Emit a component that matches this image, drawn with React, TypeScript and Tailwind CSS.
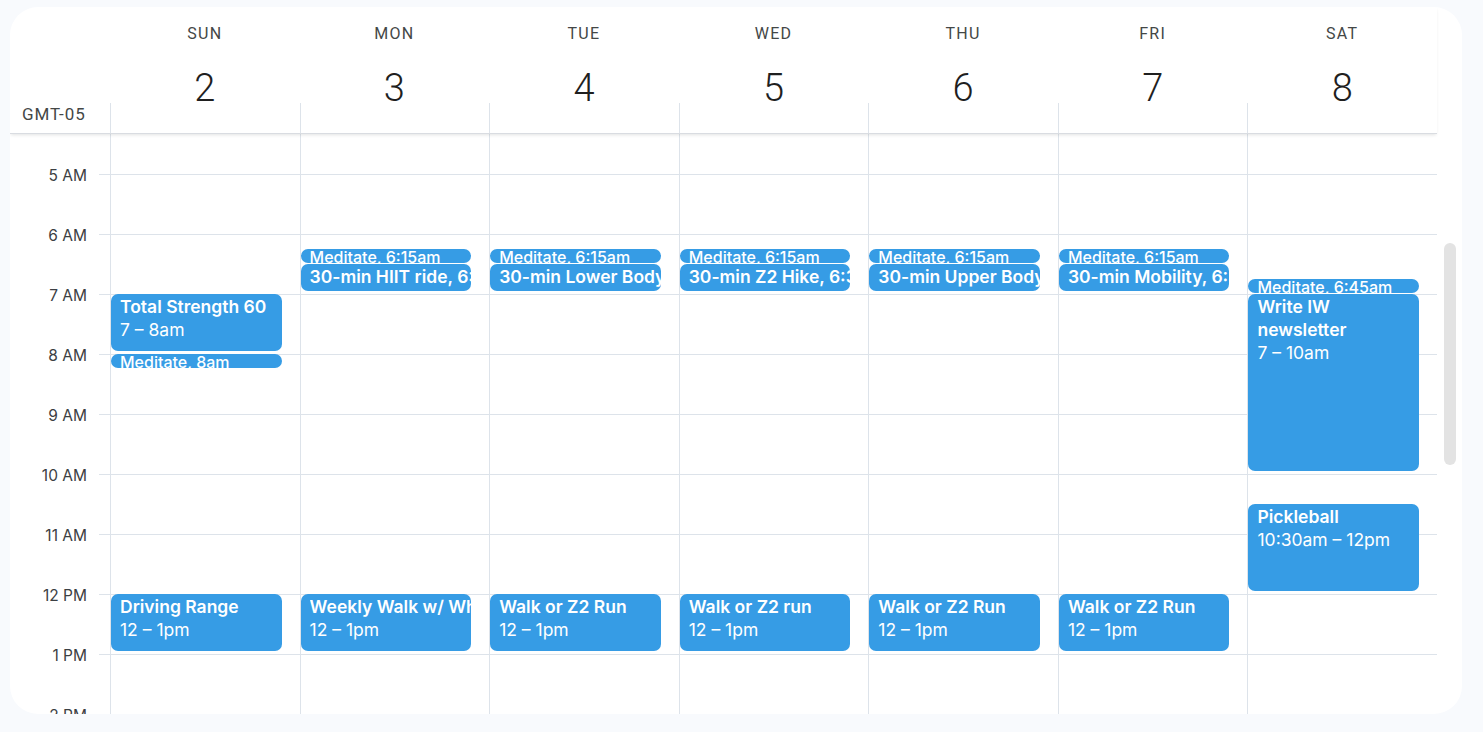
import React from "react";

const DAYS = [
  { n: "SUN", d: 2 },
  { n: "MON", d: 3 },
  { n: "TUE", d: 4 },
  { n: "WED", d: 5 },
  { n: "THU", d: 6 },
  { n: "FRI", d: 7 },
  { n: "SAT", d: 8 },
];

type Ev = { day: number; start: number; dur: number; title: string; time?: string };

const EVENTS: Ev[] = [
  { day: 0, start: 7, dur: 1, title: "Total Strength 60", time: "7 – 8am" },
  { day: 0, start: 8, dur: 0.25, title: "Meditate, 8am" },
  { day: 0, start: 12, dur: 1, title: "Driving Range", time: "12 – 1pm" },
  { day: 1, start: 6.25, dur: 0.25, title: "Meditate, 6:15am" },
  { day: 1, start: 6.5, dur: 0.5, title: "30-min HIIT ride, 6:30am" },
  { day: 1, start: 12, dur: 1, title: "Weekly Walk w/ Whitney", time: "12 – 1pm" },
  { day: 2, start: 6.25, dur: 0.25, title: "Meditate, 6:15am" },
  { day: 2, start: 6.5, dur: 0.5, title: "30-min Lower Body, 6:30am" },
  { day: 2, start: 12, dur: 1, title: "Walk or Z2 Run", time: "12 – 1pm" },
  { day: 3, start: 6.25, dur: 0.25, title: "Meditate, 6:15am" },
  { day: 3, start: 6.5, dur: 0.5, title: "30-min Z2 Hike, 6:30am" },
  { day: 3, start: 12, dur: 1, title: "Walk or Z2 run", time: "12 – 1pm" },
  { day: 4, start: 6.25, dur: 0.25, title: "Meditate, 6:15am" },
  { day: 4, start: 6.5, dur: 0.5, title: "30-min Upper Body, 6:30am" },
  { day: 4, start: 12, dur: 1, title: "Walk or Z2 Run", time: "12 – 1pm" },
  { day: 5, start: 6.25, dur: 0.25, title: "Meditate, 6:15am" },
  { day: 5, start: 6.5, dur: 0.5, title: "30-min Mobility, 6:30am" },
  { day: 5, start: 12, dur: 1, title: "Walk or Z2 Run", time: "12 – 1pm" },
  { day: 6, start: 6.75, dur: 0.25, title: "Meditate, 6:45am" },
  { day: 6, start: 7, dur: 3, title: "Write IW newsletter", time: "7 – 10am" },
  { day: 6, start: 10.5, dur: 1.5, title: "Pickleball", time: "10:30am – 12pm" },
];

const HOURS = Array.from({ length: 24 }, (_, i) => i);

function label(h: number) {
  if (h === 0) return "";
  if (h < 12) return `${h} AM`;
  if (h === 12) return "12 PM";
  return `${h - 12} PM`;
}

function EventBox({ ev }: { ev: Ev }) {
  const top = ev.start * 60;
  const height = Math.max(ev.dur * 60 - 3, 14);
  if (ev.dur <= 0.25) {
    return (
      <div
        className="absolute left-0 right-[18px] overflow-hidden whitespace-nowrap rounded-full bg-[#369ce5] pl-[9px] text-[16px] font-medium leading-[16px] text-white"
        style={{ top, height }}
      >
        {ev.title}
      </div>
    );
  }
  if (ev.dur <= 0.5) {
    return (
      <div
        className="absolute left-0 right-[18px] overflow-hidden whitespace-nowrap rounded-[7px] bg-[#369ce5] pl-[9px] pt-[1px] text-[17.5px] font-semibold leading-[23px] text-white"
        style={{ top, height }}
      >
        {ev.title}
      </div>
    );
  }
  const wrap = ev.dur > 1;
  return (
    <div
      className={
        wrap
          ? "absolute left-0 right-[18px] overflow-hidden rounded-[7px] bg-[#369ce5] pl-[9px] pr-[10px] pt-[1px] text-[17.5px] leading-[23px] text-white"
          : "absolute left-0 right-[18px] overflow-hidden rounded-[7px] bg-[#369ce5] pl-[9px] pt-[1px] text-[17.5px] leading-[23px] text-white"
      }
      style={{ top, height }}
    >
      <div className={wrap ? "font-semibold" : "overflow-hidden whitespace-nowrap font-semibold"}>{ev.title}</div>
      <div className="whitespace-nowrap">{ev.time}</div>
    </div>
  );
}

export default function App() {
  return (
    <div className="h-[732px] w-full overflow-hidden bg-[#f8fafd] px-[10px] pt-[7px] font-['Inter',sans-serif]">
      <div className="flex h-[707px] w-[1452px] flex-col overflow-hidden rounded-[28px] bg-white">
        {/* header */}
        <div className="relative z-10 flex h-[127px] shrink-0">
          <div className="flex flex-1 border-b border-[#d9dce1] shadow-[0_2px_3px_-1px_rgba(60,64,67,0.15)]">
            <div className="flex w-[100px] shrink-0 items-end pb-[9px] pl-[12px] font-['Roboto',sans-serif] text-[17px] leading-[20px] tracking-[0.9px] text-[#444746]">
              GMT-05
            </div>
            <div className="flex flex-1">
              {DAYS.map((d) => (
                <div key={d.n} className="flex flex-1 flex-col">
                  <div className="pt-[17px] text-center font-['Roboto',sans-serif] text-[16px] leading-[20px] tracking-[1.3px] text-[#444746]">
                    {d.n}
                  </div>
                  <div className="mt-[22px] text-center font-['Roboto',sans-serif] text-[38px] font-light leading-[44px] text-[#1f1f1f]">
                    {d.d}
                  </div>
                  <div className="-mt-[7px] h-[30px] border-l border-[#dde3ea]" />
                </div>
              ))}
            </div>
          </div>
          <div className="w-[25px] shrink-0" />
        </div>
        {/* body */}
        <div className="flex h-[580px] shrink-0">
          <div className="flex-1 overflow-hidden">
            <div className="-mt-[260px] flex">
              <div className="w-[100px] shrink-0">
                {HOURS.map((h) => (
                  <div key={h} className="flex h-[60px]">
                    <div className="relative -top-[8px] h-[20px] flex-1 whitespace-nowrap pr-[12px] text-right text-[15.5px] leading-[20px] text-[#3c4043]">
                      {label(h)}
                    </div>
                    <div className="w-[11px] border-t border-[#dde3ea]" />
                  </div>
                ))}
              </div>
              <div className="flex flex-1">
                {DAYS.map((d, di) => (
                  <div key={d.n} className="relative flex-1 border-l border-[#dde3ea]">
                    {HOURS.map((h) => (
                      <div key={h} className="h-[60px] border-t border-[#dde3ea]" />
                    ))}
                    {EVENTS.filter((e) => e.day === di).map((e, i) => (
                      <EventBox key={i} ev={e} />
                    ))}
                  </div>
                ))}
              </div>
            </div>
          </div>
          <div className="w-[25px] shrink-0 pl-[7px] pt-[109px]">
            <div className="h-[222px] w-[12px] rounded-full bg-[#e3e3e3]" />
          </div>
        </div>
      </div>
    </div>
  );
}
